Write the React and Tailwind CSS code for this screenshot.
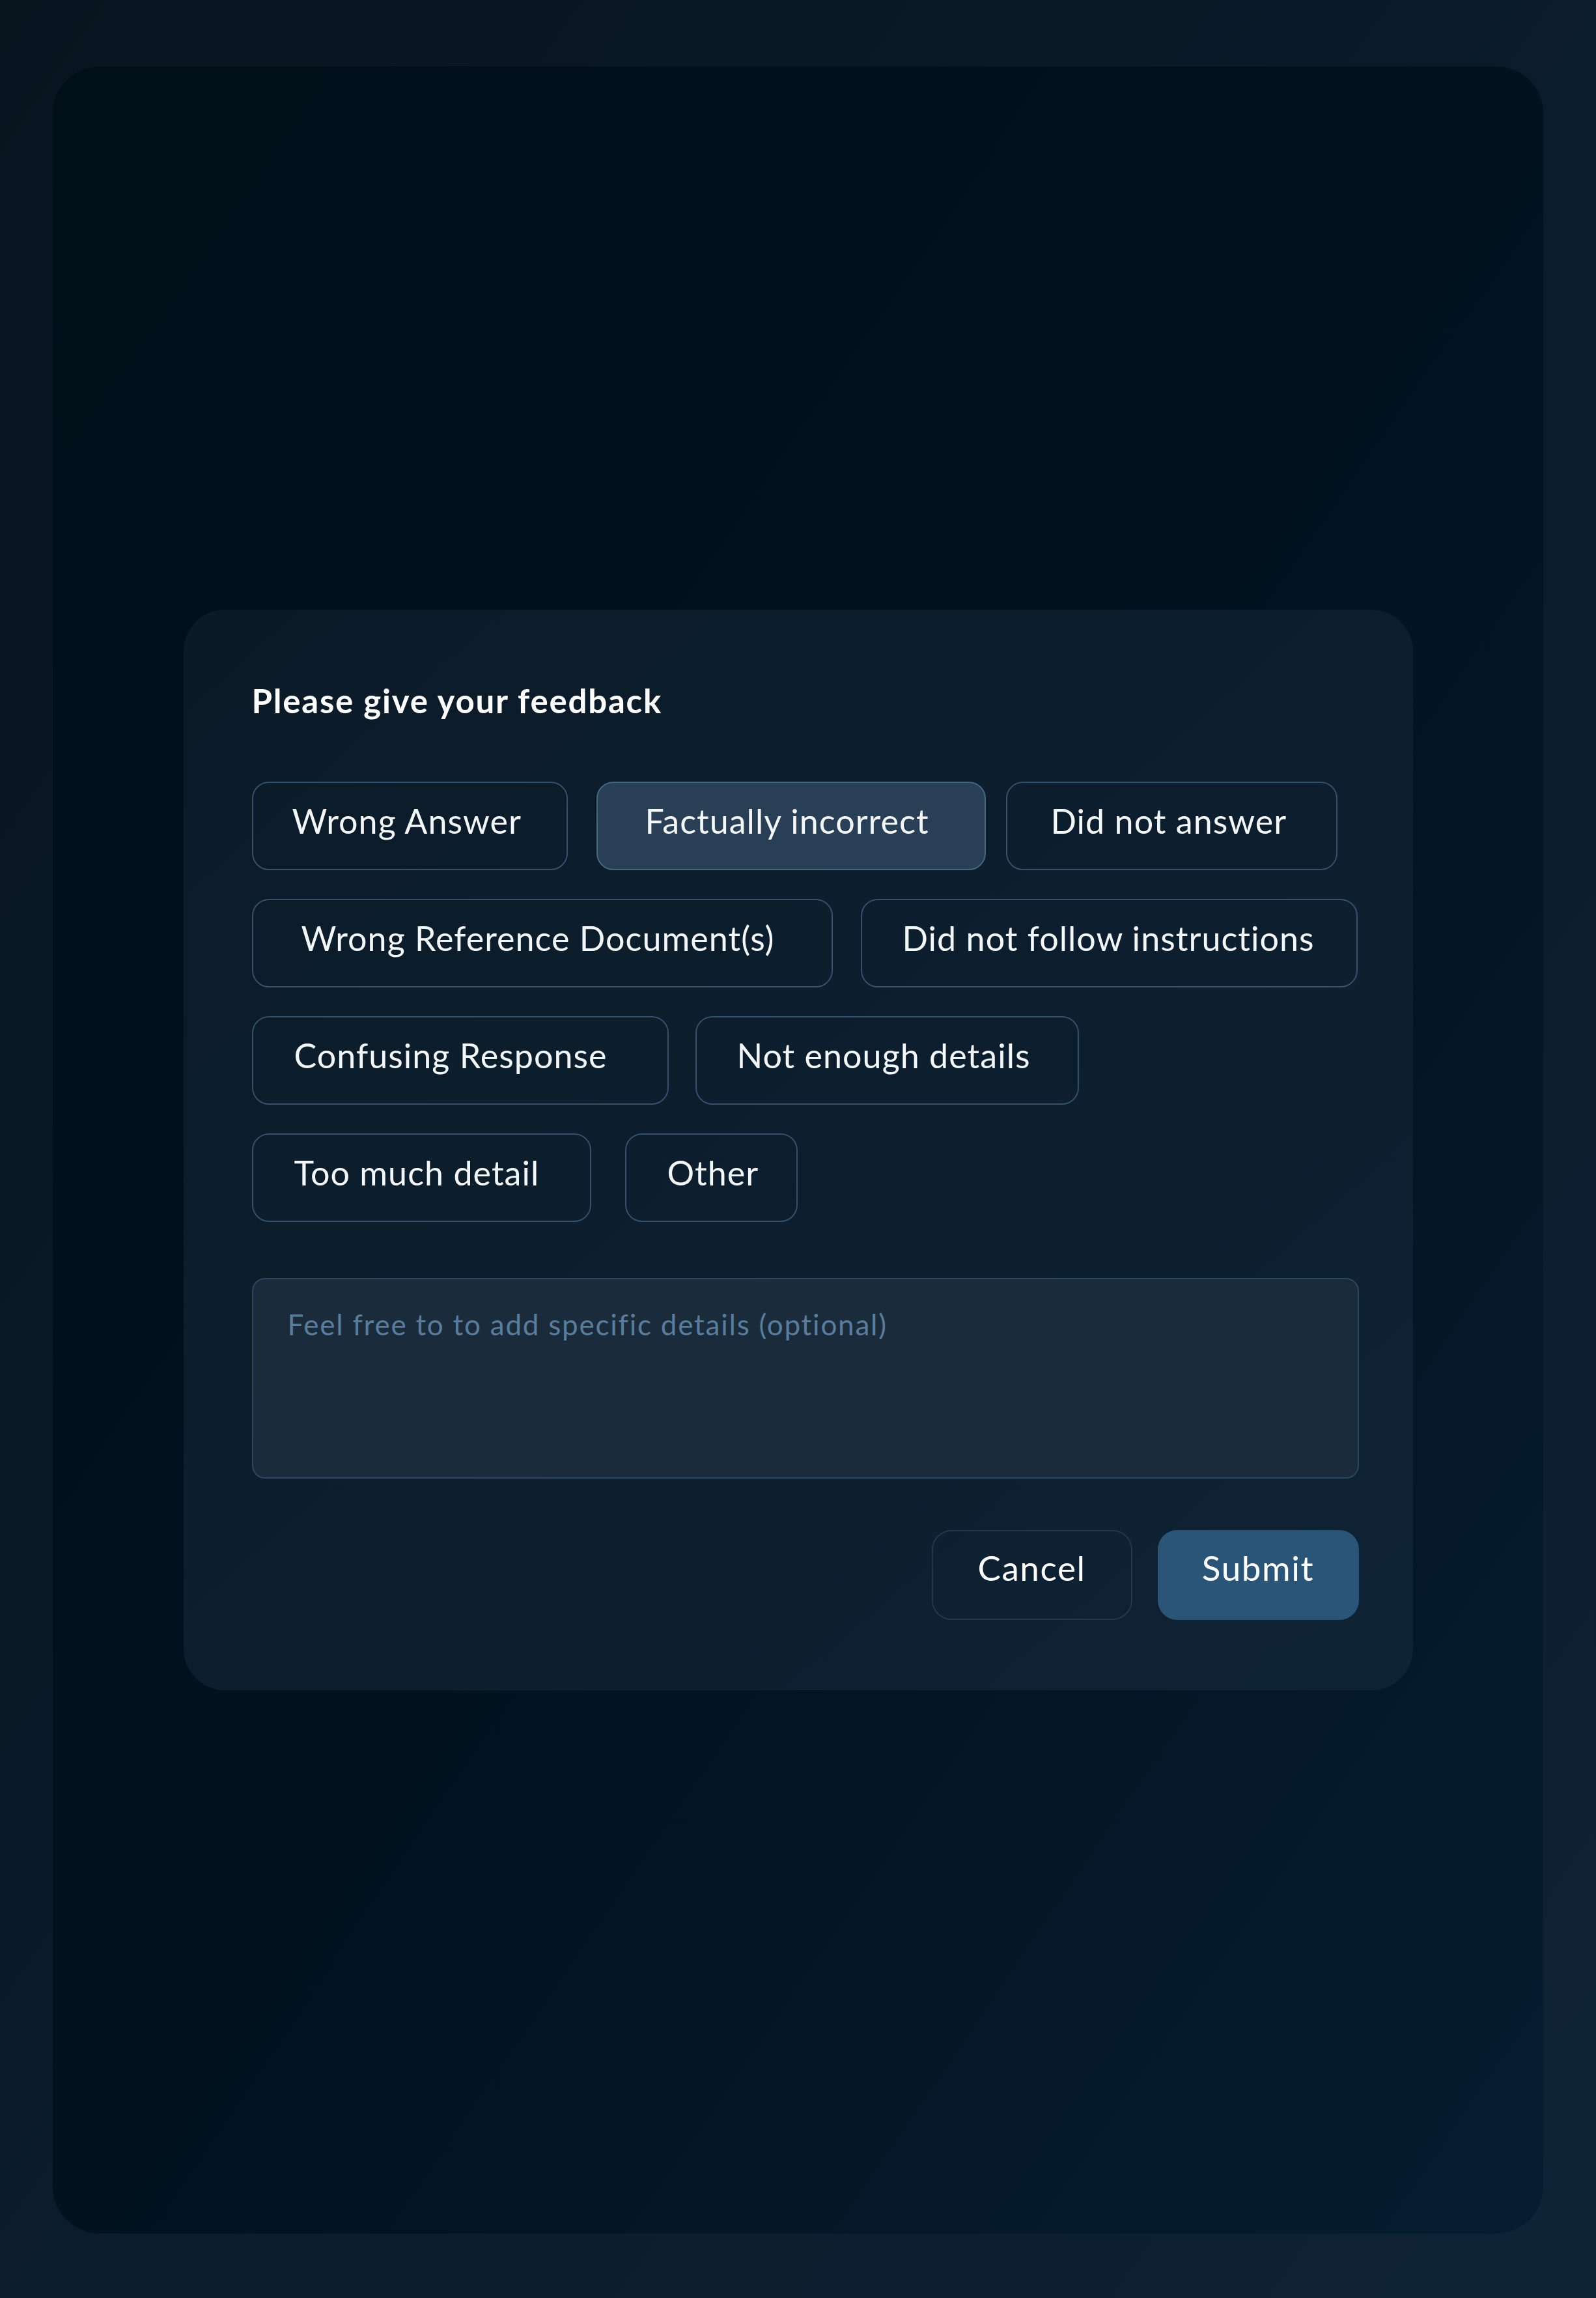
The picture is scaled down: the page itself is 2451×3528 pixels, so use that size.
import React, { useState } from "react";

const rows = [
    [
        { label: "Wrong Answer", cls: "w-[485px] pl-[60px]" },
        { label: "Factually incorrect", cls: "w-[598px] ml-[44px] pl-[73px]" },
        { label: "Did not answer", cls: "w-[509px] ml-[31px] pl-[67px]" },
    ],
    [
        { label: "Wrong Reference Document(s)", cls: "w-[892px] pl-[74px]" },
        { label: "Did not follow instructions", cls: "w-[763px] ml-[43px] pl-[62px]" },
    ],
    [
        { label: "Confusing Response", cls: "w-[640px] pl-[63px]" },
        { label: "Not enough details", cls: "w-[589px] ml-[41px] pl-[62px]" },
    ],
    [
        { label: "Too much detail", cls: "w-[521px] pl-[63px]" },
        { label: "Other", cls: "w-[265px] ml-[52px] pl-[63px]" },
    ],
];

function Chip({ label, cls, active, onClick }) {
    return (
        <button
            onClick={onClick}
            className={`${cls} h-[136px] pb-[16px] rounded-[26px] border-2 text-[52px] tracking-[0.02em] text-[#f4f7fa] flex items-center justify-start whitespace-nowrap ${active ? "bg-[#283f55] border-[#46657f]" : "bg-transparent border-[#34506a]"}`}
        >
            {label}
        </button>
    );
}

export default function App() {
    const [selected, setSelected] = useState("Factually incorrect");

    return (
        <div className="min-h-screen bg-gradient-to-br from-[#08141e] to-[#0e2336] px-[81px] pt-[102px] pb-[99px] font-['Lato','Liberation_Sans',sans-serif]">
            <div className="h-[3327px] rounded-[72px] bg-gradient-to-br from-[#010f18] via-[#02121f] to-[#061d31] flex items-center justify-center">
                <div className="w-[1888px] rounded-[64px] bg-gradient-to-br from-[#0b1a27] to-[#0e2335] pl-[105px] pr-[83px] pt-[110px] pb-[108px]">
                    <h2 className="text-[51px] leading-[60px] font-bold tracking-[0.035em] text-white">Please give your feedback</h2>

                    <div className="mt-[94px] flex flex-col gap-[44px]">
                        {rows.map((row, i) => (
                            <div key={i} className="flex">
                                {row.map((c) => (
                                    <Chip
                                        key={c.label}
                                        label={c.label}
                                        cls={c.cls}
                                        active={selected === c.label}
                                        onClick={() => setSelected(c.label)}
                                    />
                                ))}
                            </div>
                        ))}
                    </div>

                    <textarea
                        placeholder="Feel free to to add specific details (optional)"
                        className="mt-[86px] block w-[1700px] h-[308px] resize-none rounded-[20px] border-2 border-[#2c4760] bg-[#1a2c3c] pl-[53px] pt-[43px] text-[44px] leading-[1.2] tracking-[0.04em] text-white placeholder:text-[#5a7d9c] outline-none"
                    />

                    <div className="mt-[79px] w-[1700px] flex justify-end gap-[39px]">
                        <button className="w-[308px] h-[138px] pb-[22px] rounded-[30px] border-2 border-[#27374a] text-[53px] tracking-[0.03em] text-white">
                            Cancel
                        </button>
                        <button className="w-[309px] h-[138px] pb-[22px] rounded-[30px] bg-[#2a5577] text-[53px] tracking-[0.03em] text-white">
                            Submit
                        </button>
                    </div>
                </div>
            </div>
        </div>
    );
}
